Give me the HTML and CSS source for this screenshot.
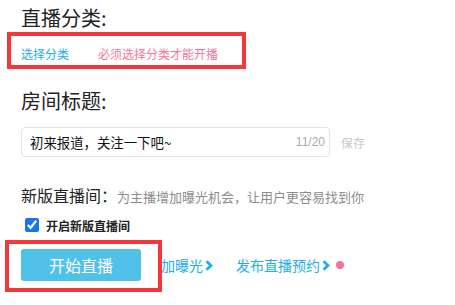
FILE: index.html
```html
<!DOCTYPE html>
<html lang="zh-CN">
<head>
<meta charset="utf-8">
<link rel="stylesheet" href="styles.css">
</head>
<body>
<div class="page">
  <div class="title first">直播分类:</div>
  <div class="category-row">
    <a class="choose">选择分类</a>
    <span class="warn">必须选择分类才能开播</span>
  </div>

  <div class="title second">房间标题:</div>
  <div class="title-row">
    <div class="input-box">
      <span class="input-text">初来报道，关注一下吧~</span>
      <span class="counter">11/20</span>
    </div>
    <span class="save">保存</span>
  </div>

  <div class="new-row">
    <span class="new-label">新版直播间：</span>
    <span class="new-desc">为主播增加曝光机会，让用户更容易找到你</span>
  </div>
  <label class="check-row">
    <input type="checkbox" class="check" checked>
    <span class="check-text">开启新版直播间</span>
  </label>

  <div class="action-row">
    <button class="start-btn">开始直播</button>
    <a class="link link-first">加曝光<svg class="chev" width="8" height="11" viewBox="0 0 8 11"><polyline points="1.5,1.2 6,5.5 1.5,9.8" fill="none" stroke="#23ade5" stroke-width="2.8"/></svg></a>
    <a class="link link-second">发布直播预约<svg class="chev" width="8" height="11" viewBox="0 0 8 11"><polyline points="1.5,1.2 6,5.5 1.5,9.8" fill="none" stroke="#23ade5" stroke-width="2.8"/></svg></a>
    <span class="dot"></span>
  </div>

  <div class="mark mark-category"></div>
  <div class="mark mark-start"></div>
</div>
</body>
</html>
```

FILE: styles.css
```css
* { box-sizing: border-box; }
html, body {
  margin: 0;
  padding: 0;
  background: #fff;
}
body {
  font-family: "Noto Sans CJK SC", "Noto Sans", sans-serif;
  color: #222;
}
.page {
  position: relative;
  width: 455px;
  height: 305px;
  padding: 4px 0 0 21px;
  overflow: hidden;
}
.title {
  font-size: 20px;
  line-height: 28px;
  color: #222;
}
.category-row {
  height: 44px;
  line-height: 44px;
  font-size: 12px;
  display: flex;
}
.choose {
  color: #23ade5;
}
.warn {
  color: #fb7299;
  margin-left: 29px;
}
.title.second {
  margin-top: 11px;
}
.title-row {
  margin-top: 12px;
  display: flex;
  align-items: center;
}
.input-box {
  width: 309px;
  height: 30px;
  border: 1px solid #e5e5e5;
  border-radius: 4px;
  display: flex;
  align-items: center;
  justify-content: space-between;
  padding: 0 4px 0 8px;
}
.input-text {
  font-size: 13.4px;
  color: #111;
}
.counter {
  font-size: 12px;
  color: #aaa;
  font-family: "Liberation Sans", sans-serif;
}
.save {
  margin-left: 11px;
  font-size: 12px;
  color: #c8c8c8;
}
.new-row {
  margin-top: 26px;
  height: 24px;
  line-height: 24px;
  display: flex;
  align-items: baseline;
}
.new-label {
  font-size: 16px;
  color: #222;
}
.new-desc {
  font-size: 13px;
  color: #8c8c8c;
}
.check-row {
  margin-top: 8px;
  height: 20px;
  display: flex;
  align-items: center;
}
.check {
  width: 14px;
  height: 14px;
  margin: 0 0 0 4px;
  accent-color: #1a73e8;
}
.check-text {
  margin-left: 7px;
  font-size: 12px;
  font-weight: bold;
  color: #222;
}
.action-row {
  margin-top: 14px;
  display: flex;
  align-items: center;
  height: 32px;
}
.start-btn {
  width: 120px;
  height: 32px;
  border: none;
  border-radius: 3px;
  background: #50c1e9;
  color: #fff;
  font-family: inherit;
  font-size: 16px;
  padding: 0;
}
.link {
  display: flex;
  align-items: center;
  font-size: 14px;
  color: #23ade5;
}
.link-first {
  margin-left: 20px;
}
.link-second {
  margin-left: 23px;
}
.chev {
  margin-left: 2px;
}
.dot {
  width: 8px;
  height: 8px;
  border-radius: 50%;
  background: #f5729a;
  margin-left: 6px;
}
.mark {
  position: absolute;
  border: 4px solid #f5363b;
}
.mark-category {
  left: 7px;
  top: 32px;
  width: 239px;
  height: 37px;
}
.mark-start {
  left: 5px;
  top: 240px;
  width: 157px;
  height: 52px;
}
```
